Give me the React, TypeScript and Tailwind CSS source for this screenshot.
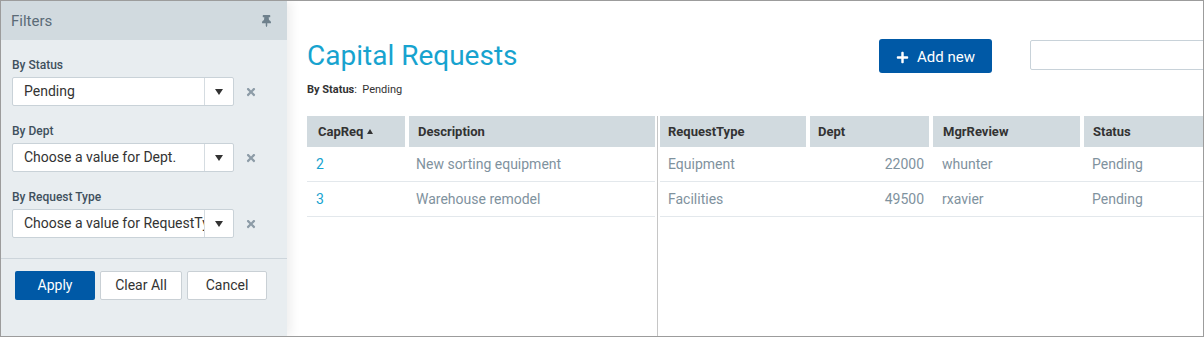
import { FaThumbtack, FaTimes, FaPlus } from "react-icons/fa";

const filters = [
  { label: "By Status", value: "Pending" },
  { label: "By Dept", value: "Choose a value for Dept." },
  { label: "By Request Type", value: "Choose a value for RequestType" },
];

const rows = [
  { id: "2", desc: "New sorting equipment", type: "Equipment", dept: "22000", mgr: "whunter", status: "Pending" },
  { id: "3", desc: "Warehouse remodel", type: "Facilities", dept: "49500", mgr: "rxavier", status: "Pending" },
];

function Caret() {
  return <span className="block w-0 h-0 border-l-[4px] border-r-[4px] border-t-[6px] border-l-transparent border-r-transparent border-t-[#333]" />;
}

export default function App() {
  return (
    <div
      className="w-[1204px] h-[337px] border border-[#9c9c9c] flex overflow-hidden bg-white"
      style={{ fontFamily: "Roboto, 'Liberation Sans', sans-serif" }}
    >
      {/* Filters panel */}
      <aside className="w-[286px] shrink-0 flex flex-col bg-[#e8edf0] shadow-[4px_0_10px_rgba(0,0,0,0.07)] z-10">
        <div className="h-[39px] shrink-0 bg-[#d1dadf] flex items-center justify-between pl-[10px] pr-[15px] pt-[1px]">
          <span className="text-[15px] text-[#5b6b77]">Filters</span>
          <FaThumbtack className="text-[#6e808c] w-[11px] h-[12px]" />
        </div>
        <div className="pt-[17px] pl-[11px] pb-[20px] flex flex-col gap-[17px]">
          {filters.map((f) => (
            <div key={f.label}>
              <div className="text-[12px] leading-[16px] font-medium text-[#3f505d] mb-[4px]">{f.label}</div>
              <div className="flex items-center">
                <div className="w-[222px] h-[29px] bg-white border border-[#c9d2d8] rounded-[2px] flex">
                  <div className="flex-1 min-w-0 pl-[11px] flex items-center text-[14px] text-[#333] whitespace-nowrap overflow-hidden">
                    {f.value}
                  </div>
                  <div className="w-[29px] border-l border-[#d5dce1] flex items-center justify-center">
                    <Caret />
                  </div>
                </div>
                <FaTimes className="ml-[11px] w-[12px] h-[12px] text-[#8d9ca7]" />
              </div>
            </div>
          ))}
        </div>
        <div className="border-t border-[#cdd5db] pt-[12px] pl-[14px] flex gap-[5px]">
          <button className="w-[80px] h-[29px] rounded-[2px] bg-[#0059a6] text-white text-[14px]">Apply</button>
          <button className="w-[82px] h-[29px] rounded-[2px] bg-white border border-[#c9d0d5] text-[#333] text-[14px]">Clear All</button>
          <button className="w-[80px] h-[29px] rounded-[2px] bg-white border border-[#c9d0d5] text-[#333] text-[14px]">Cancel</button>
        </div>
      </aside>

      {/* Main area */}
      <main className="flex-1 min-w-0 flex flex-col pl-[20px] overflow-hidden">
        <div className="flex pt-[38px]">
          <div className="w-[572px] shrink-0">
            <h1 className="text-[28px] leading-[34px] text-[#17a3cf]">Capital Requests</h1>
            <div className="mt-[10px] text-[11px] leading-[14px] text-[#333]">
              <span className="font-bold">By Status</span>:&nbsp; Pending
            </div>
          </div>
          <button className="w-[113px] h-[34px] shrink-0 rounded-[3px] bg-[#0059a6] text-white text-[15px] flex items-center justify-center gap-[8px] pt-[2px]">
            <FaPlus className="w-[13px] h-[13px]" />
            Add new
          </button>
          <div className="ml-[38px] w-[220px] h-[30px] mt-[1px] shrink-0 border border-[#c8d2d9] rounded-[2px] bg-white" />
        </div>

        {/* Grid */}
        <div className="mt-[19px] flex flex-1">
          <div className="w-[348px] shrink-0">
            <div className="flex gap-[4px] h-[31px] text-[13px] font-bold text-[#333]">
              <div className="w-[98px] bg-[#d1dadf] pl-[11px] flex items-center gap-[4px]">
                CapReq
                <span className="block w-0 h-0 border-l-[3px] border-r-[3px] border-b-[5px] border-l-transparent border-r-transparent border-b-[#333]" />
              </div>
              <div className="flex-1 bg-[#d1dadf] pl-[9px] flex items-center">Description</div>
            </div>
            {rows.map((r) => (
              <div key={r.id} className="flex gap-[4px] h-[35px] border-b border-[#e3e8ec] text-[14px] items-center">
                <div className="w-[98px] pl-[9px] text-[#17a3cf]">{r.id}</div>
                <div className="flex-1 pl-[7px] text-[#7f929e]">{r.desc}</div>
              </div>
            ))}
          </div>
          <div className="ml-[2px] flex-1 border-l border-[#c6c6c6] pl-[2px]">
            <div className="flex gap-[4px] h-[31px] text-[13px] font-bold text-[#333]">
              <div className="w-[146px] bg-[#d1dadf] pl-[8px] flex items-center">RequestType</div>
              <div className="w-[119px] bg-[#d1dadf] pl-[8px] flex items-center">Dept</div>
              <div className="w-[147px] bg-[#d1dadf] pl-[10px] flex items-center">MgrReview</div>
              <div className="flex-1 bg-[#d1dadf] pl-[9px] flex items-center">Status</div>
            </div>
            {rows.map((r) => (
              <div key={r.id} className="flex gap-[4px] h-[35px] border-b border-[#e3e8ec] text-[14px] items-center text-[#7f929e]">
                <div className="w-[146px] pl-[8px]">{r.type}</div>
                <div className="w-[119px] pr-[5px] text-right">{r.dept}</div>
                <div className="w-[147px] pl-[9px]">{r.mgr}</div>
                <div className="flex-1 pl-[8px]">{r.status}</div>
              </div>
            ))}
          </div>
        </div>
      </main>
    </div>
  );
}
